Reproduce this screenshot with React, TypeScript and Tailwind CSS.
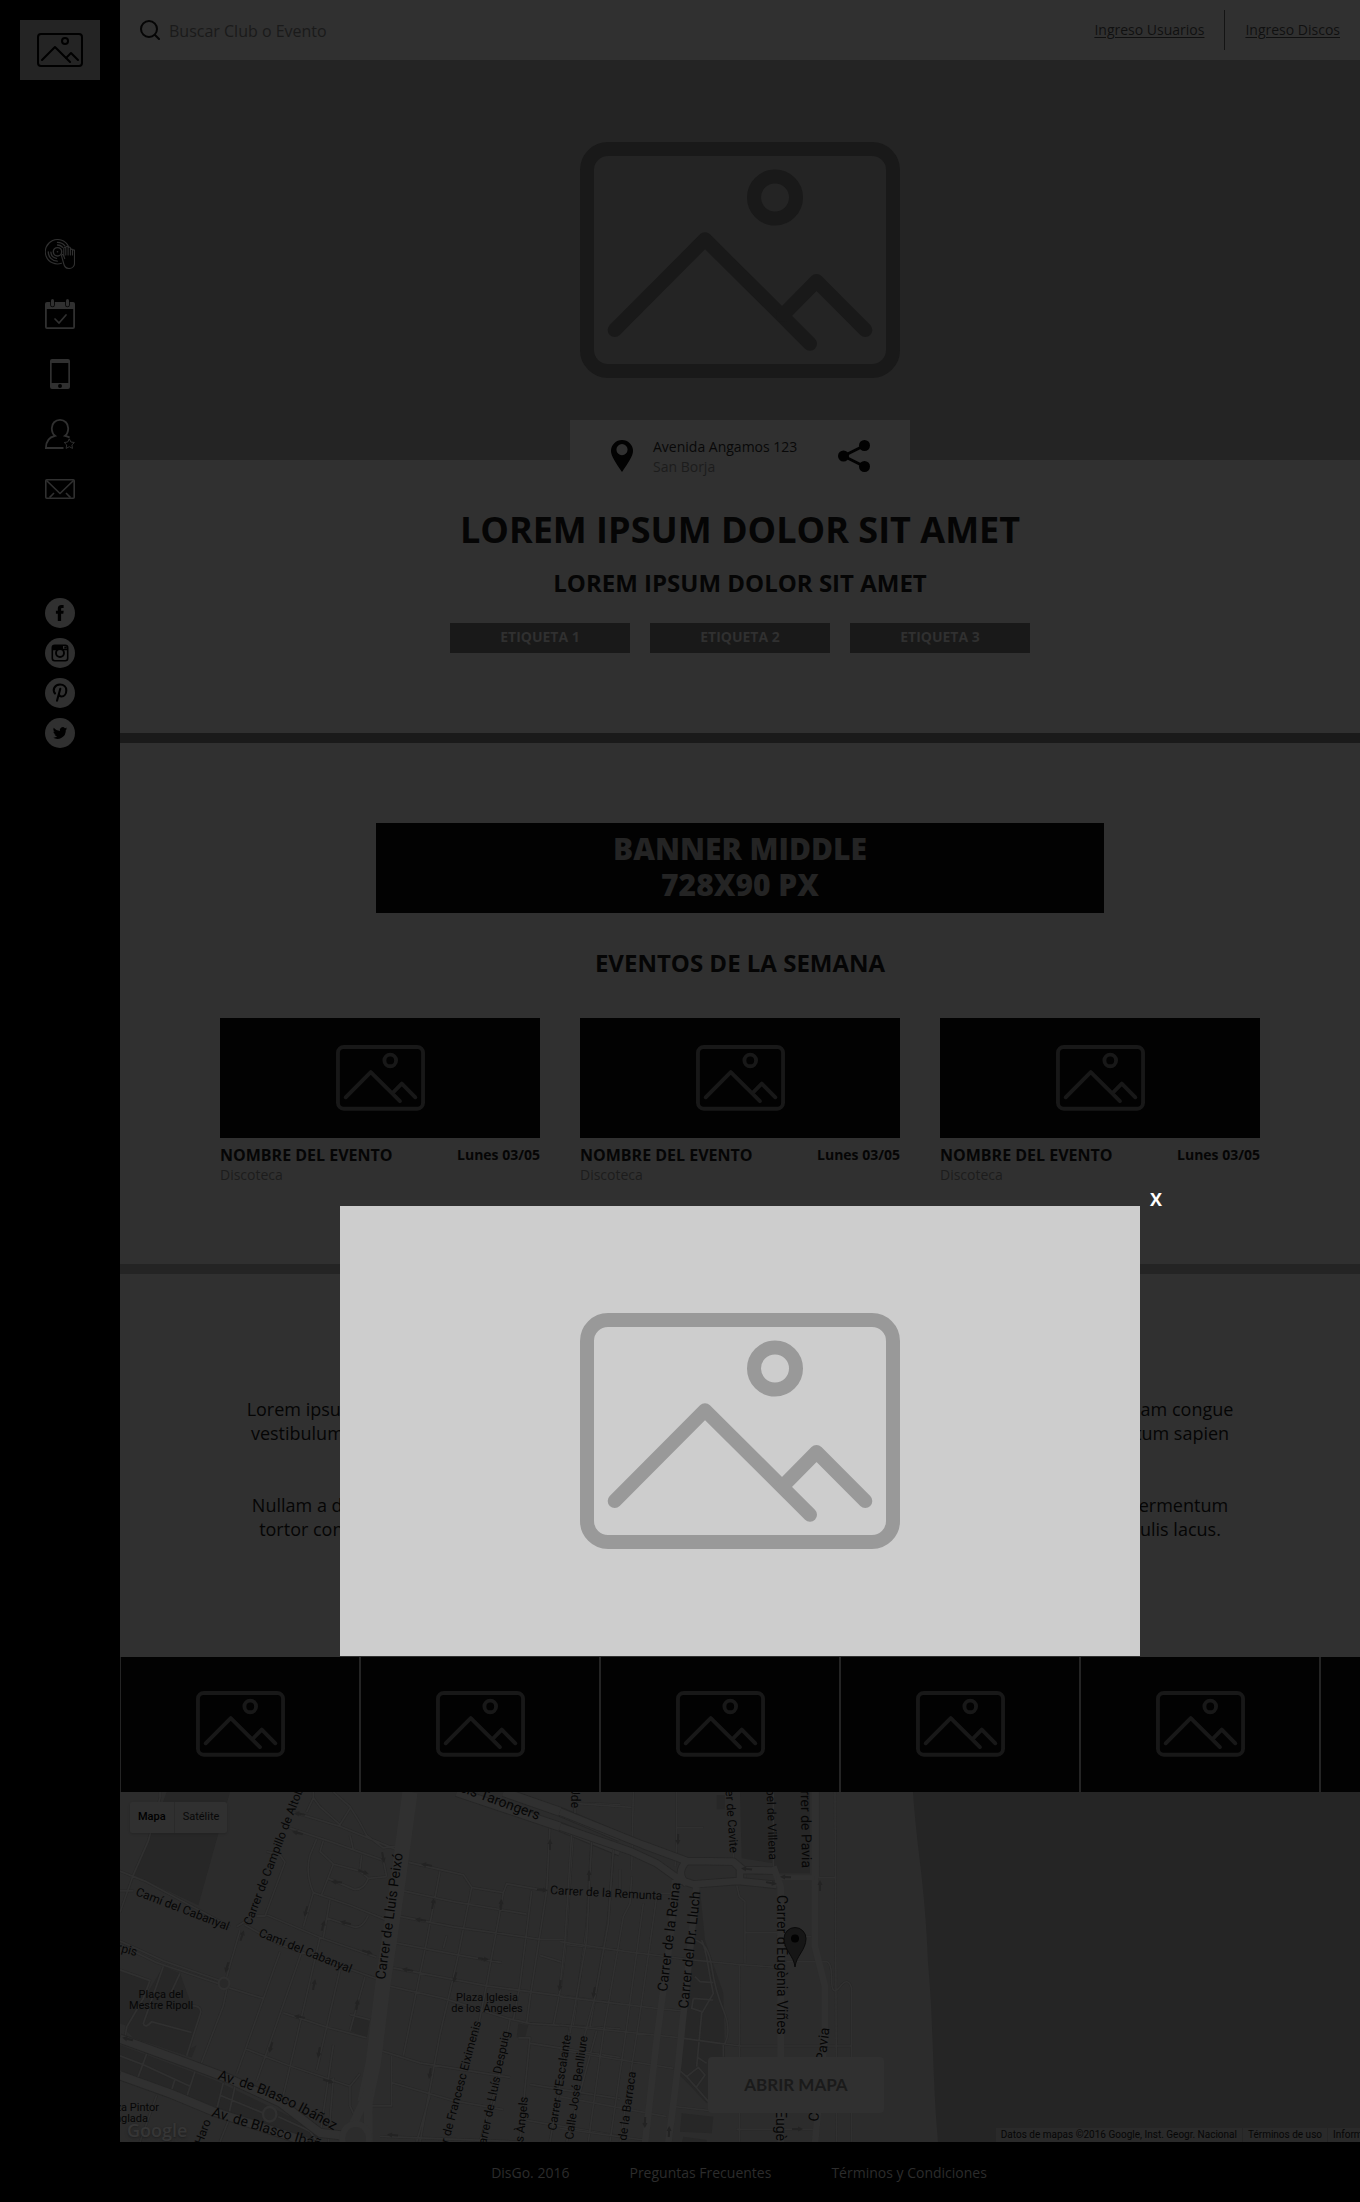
import React from "react";

function PictureIcon({ className }: { className: string }) {
  return (
    <svg viewBox="0 0 320 236" fill="none" stroke="currentColor" strokeWidth="14" strokeLinecap="round" strokeLinejoin="round" className={className} aria-hidden="true">
      <rect x="7" y="7" width="306" height="222" rx="21" />
      <circle cx="195" cy="55.500" r="21" />
      <path d="M34.700 188 125 97.300 230 201.700" />
      <path d="M203 173 236.500 139 285.300 188" />
    </svg>
  );
}

function DiscIcon() {
  return (
    <svg viewBox="0 0 30 30" className="h-[30px] w-[30px]" fill="none" stroke="currentColor" strokeWidth="1.100" strokeLinecap="round" aria-hidden="true">
      <path d="M23.500 7.500A12.200 12.200 0 1 0 16.500 24.300" />
      <circle cx="12.500" cy="12.800" r="4.200" strokeWidth="1.400" />
      <circle cx="12.500" cy="12.800" r="0.800" fill="currentColor" stroke="none" />
      <path d="M12.500 3.400a9.400 9.400 0 0 1 7.300 3.500M12.500 6a6.800 6.800 0 0 1 5 2.200M3.300 12.800a9.200 9.200 0 0 0 9 9.400M5.900 13.200a6.600 6.600 0 0 0 5.600 6.100" strokeWidth="1.300" />
      <path d="M18.800 17V9.200c0-1.300 2-1.300 2 0V16M20.800 9v-.8c0-1.300 2.300-1.300 2.300 0V16M23.100 9c0-1.300 2.300-1.300 2.300 0v7M25.400 11c0-1.200 2.100-1.200 2.100 0V16" />
      <path d="M27.500 11.500c0-1 2-1 2 0v13c0 2-1.500 5-5.500 5-3.400 0-4.600-2.200-5.200-4.500l-2.200-8c-.4-1.600 1.400-1.900 2-.6l1.100 3.200" />
    </svg>
  );
}

function CalendarIcon() {
  return (
    <svg viewBox="0 0 30 30" className="h-[30px] w-[30px]" aria-hidden="true">
      <path fill="currentColor" fillRule="evenodd" d="M2 3h26a2 2 0 0 1 2 2v23a2 2 0 0 1-2 2H2a2 2 0 0 1-2-2V5a2 2 0 0 1 2-2Zm-.200 7v18.200h26.400V10Z" />
      <rect x="5.200" y="-1" width="4.600" height="9.300" rx="2.300" className="fill-black" />
      <rect x="20.200" y="-1" width="4.600" height="9.300" rx="2.300" className="fill-black" />
      <rect x="6" y="0" width="3" height="7.500" rx="1.500" fill="currentColor" />
      <rect x="21" y="0" width="3" height="7.500" rx="1.500" fill="currentColor" />
      <path d="m10 20 4 4 7-8" fill="none" stroke="currentColor" strokeWidth="1.700" strokeLinecap="round" />
    </svg>
  );
}

function PhoneIcon() {
  return (
    <svg viewBox="0 0 30 30" className="h-[30px] w-[30px]" fill="currentColor" fillRule="evenodd" aria-hidden="true">
      <path d="M7 0h16a2 2 0 0 1 2 2v26a2 2 0 0 1-2 2H7a2 2 0 0 1-2-2V2a2 2 0 0 1 2-2Zm-.300 4v20h16.600V4Zm8.300 21a2 2 0 1 0 0 4 2 2 0 0 0 0-4Z" />
    </svg>
  );
}

function UserStarIcon() {
  return (
    <svg viewBox="0 0 30 30" className="h-[30px] w-[30px]" fill="none" stroke="currentColor" aria-hidden="true">
      <path strokeWidth="1.800" d="M18.500 29H.900c0-7 2.600-10.800 9.100-12.200C7.600 15 6.800 11.700 6.800 9.200c0-4.800 3.500-8.300 8.200-8.300s8.200 3.500 8.200 8.300c0 2.500-.8 5.800-3.200 7.600 1.900.4 3.400.9 4.600 1.700" />
      <path strokeWidth="1" strokeLinejoin="round" d="m24.300 19.800 1.600 3.200 3.500.5-2.500 2.400.6 3.500-3.200-1.700-3.200 1.700.6-3.500-2.500-2.400 3.500-.5Z" />
    </svg>
  );
}

function MailIcon() {
  return (
    <svg viewBox="0 0 30 20" className="h-5 w-[30px]" fill="none" stroke="currentColor" strokeWidth="1.600" strokeLinejoin="round" aria-hidden="true">
      <rect x="0.800" y="0.800" width="28.400" height="18.400" rx="1" />
      <path d="m1.500 1.500 13.500 13 13.500-13M9 14l-4.500 4.600M21 14l4.500 4.600" />
    </svg>
  );
}

const menu = [
  { label: "Discotecas", icon: <DiscIcon /> },
  { label: "Eventos", icon: <CalendarIcon /> },
  { label: "Aplicación", icon: <PhoneIcon /> },
  { label: "Favoritos", icon: <UserStarIcon /> },
  { label: "Contacto", icon: <MailIcon /> },
];

const social = [
  {
    label: "Facebook",
    art: <path className="fill-black" d="M12.800 23v-7.200h-1.900v-3h1.900v-2.200c0-2.400 1.300-3.700 3.600-3.700h2.200v3h-1.400c-.9 0-1.100.4-1.100 1.100v1.800h2.600l-.4 3h-2.200V23Z" />,
  },
  {
    label: "Instagram",
    art: (
      <g className="stroke-black" fill="none">
        <rect x="7.300" y="7.300" width="15.400" height="15.400" rx="2.500" strokeWidth="1.600" />
        <path d="M7 11.500h5M18 11.500h5" strokeWidth="1.600" />
        <path d="M8 8h10v3H8Z" className="fill-black" stroke="none" />
        <circle cx="15" cy="15" r="4" strokeWidth="1.900" />
        <path d="M20.500 8.500v2" strokeWidth="2.400" />
      </g>
    ),
  },
  {
    label: "Pinterest",
    art: (
      <path
        className="stroke-black"
        fill="none"
        strokeWidth="2.100"
        strokeLinecap="round"
        d="M10 15.500C7.300 12 9.200 6.500 15 6.500c4 0 6.300 2.500 6.300 5.700 0 3.600-2 6.300-4.800 6.300-1.600 0-2.600-1-2.400-2.300M15.300 10.800 12 22.800"
      />
    ),
  },
  {
    label: "Twitter",
    art: (
      <path
        className="fill-black"
        d="M22.200 10.600c-.5.200-1.100.4-1.700.5.600-.4 1-.9 1.300-1.600-.6.300-1.200.6-1.900.7a2.900 2.900 0 0 0-5 2.700c-2.500-.1-4.600-1.300-6.100-3.100-.8 1.300-.4 3.100.9 4-.5 0-.9-.2-1.300-.4 0 1.400 1 2.600 2.400 2.900-.4.100-.9.100-1.300 0 .4 1.200 1.400 2 2.700 2a6 6 0 0 1-4.400 1.300 8.400 8.400 0 0 0 13-7.500c.5-.4 1-.9 1.400-1.500Z"
      />
    ),
  },
];

function Sidebar() {
  return (
    <aside className="flex w-30 shrink-0 flex-col items-center bg-black pt-5 text-[#303030]">
      <a href="#inicio" aria-label="DisGo" className="flex h-[60px] w-20 items-center justify-center bg-[#242424] text-black">
        <PictureIcon className="w-[46px]" />
      </a>
      <nav aria-label="Principal" className="mt-[159px] flex flex-col gap-[30px]">
        {menu.map((m) => (
          <a key={m.label} href="#menu" aria-label={m.label}>
            {m.icon}
          </a>
        ))}
      </nav>
      <nav aria-label="Redes sociales" className="mt-[99px] flex flex-col gap-2.5">
        {social.map((s) => (
          <a key={s.label} href="#social" aria-label={s.label}>
            <svg viewBox="0 0 30 30" className="h-[30px] w-[30px]" aria-hidden="true">
              <circle cx="15" cy="15" r="15" fill="currentColor" />
              {s.art}
            </svg>
          </a>
        ))}
      </nav>
    </aside>
  );
}

function Header() {
  return (
    <header className="flex h-[60px] items-center justify-between bg-[#303030] px-5">
      <label className="flex items-center gap-[9px]">
        <svg viewBox="0 0 20 20" className="h-5 w-5" fill="none" stroke="#050505" strokeWidth="2" strokeLinecap="round" aria-hidden="true">
          <circle cx="9" cy="9" r="8" />
          <path d="m15 15 4 4" />
        </svg>
        <input type="search" aria-label="Buscar" placeholder="Buscar Club o Evento" className="w-60 bg-transparent pt-0.5 text-base text-[#1a1a1a] outline-none placeholder:text-[#1a1a1a]" />
      </label>
      <nav aria-label="Ingreso" className="flex items-center gap-5 text-sm text-[#101010]">
        <a href="#usuarios" className="underline underline-offset-2">Ingreso Usuarios</a>
        <span className="h-10 w-px bg-[#141414]" />
        <a href="#discos" className="underline underline-offset-2">Ingreso Discos</a>
      </nav>
    </header>
  );
}

function VenueIntro() {
  return (
    <section className="flex flex-col items-center border-b-10 border-[#1a1a1a] pb-20">
      <div className="-mt-10 flex h-[60px] w-[340px] items-start justify-between bg-[#303030] px-10 pt-5">
        <div className="flex gap-[19px]">
          <svg viewBox="0 0 24 32" className="h-8 w-6" fill="#020202" fillRule="evenodd" aria-hidden="true">
            <path d="M12 0a11 11 0 0 1 11 11c0 5-5 12-11 21C6 23 1 16 1 11A11 11 0 0 1 12 0Zm0 4a5.600 5.600 0 1 0 0 11.200A5.600 5.600 0 0 0 12 4Z" />
          </svg>
          <address className="-mt-[3px] text-sm/5 whitespace-nowrap not-italic">
            <div className="text-[#080808]">Avenida Angamos 123</div>
            <div className="text-[#1c1c1c]">San Borja</div>
          </address>
        </div>
        <button type="button" aria-label="Compartir">
          <svg viewBox="0 0 32 32" className="h-8 w-8" fill="#020202" aria-hidden="true">
            <path d="M5.500 16 26.500 5.500M5.500 16l21 10.500" stroke="#020202" strokeWidth="3" />
            <circle cx="5.500" cy="16" r="5.500" />
            <circle cx="26.500" cy="5.500" r="5.500" />
            <circle cx="26.500" cy="26.500" r="5.500" />
          </svg>
        </button>
      </div>
      <h1 className="mt-[30px] text-4xl/10 font-bold">LOREM IPSUM DOLOR SIT AMET</h1>
      <h2 className="mt-[17px] text-2xl/8 font-bold">LOREM IPSUM DOLOR SIT AMET</h2>
      <ul className="mt-6 flex gap-5">
        {["ETIQUETA 1", "ETIQUETA 2", "ETIQUETA 3"].map((t) => (
          <li key={t}>
            <a href="#etiqueta" className="flex h-[30px] w-[180px] items-center justify-center bg-[#191919] pb-0.5 text-sm font-bold text-[#303030]">
              {t}
            </a>
          </li>
        ))}
      </ul>
    </section>
  );
}

function Events() {
  return (
    <section className="flex flex-col items-center border-b-10 border-[#242424] px-[100px] pt-20 pb-[79px]">
      <div className="flex h-[90px] w-full max-w-[728px] flex-col items-center justify-center bg-[#020202] pb-0.5 text-3xl/9 font-extrabold text-[#242424]">
        <span>BANNER MIDDLE</span>
        <span>728X90 PX</span>
      </div>
      <h2 className="mt-[34px] text-2xl/8 font-bold">EVENTOS DE LA SEMANA</h2>
      <div className="mt-[39px] grid w-full grid-cols-3 gap-10">
        {[1, 2, 3].map((n) => (
          <article key={n}>
            <div className="flex h-30 items-center justify-center bg-[#020202] text-[#181818]">
              <PictureIcon className="w-[89px]" />
            </div>
            <div className="mt-[7px] flex items-center justify-between leading-5">
              <h3 className="text-base/5 font-bold">NOMBRE DEL EVENTO</h3>
              <time className="text-sm/5 font-bold">Lunes 03/05</time>
            </div>
            <p className="text-sm/5 text-[#1c1c1c]">Discoteca</p>
          </article>
        ))}
      </div>
    </section>
  );
}

function About() {
  return (
    <section className="flex flex-col gap-12 overflow-hidden pt-[123px] pb-[116px] text-center text-lg/6 whitespace-nowrap">
      <p>
        Lorem ipsum dolor sit amet, consectetur adipiscing elit. Praesent euismod est lectus vitae sapien, nec aliquam congue
        <br />
        vestibulum, nibh nisi sed interdum posuere, massa justo viverra turpis, vel ornare neque lorem condimentum sapien
      </p>
      <p>
        Nullam a dolor vel risus tempor suscipit. Integer nunc dapibus, augue non pretium luctus, nulla est porta fermentum
        <br />
        tortor congue. Sed mattis, est ac ipsum eget commodo rhoncus, velit orci laoreet purus, in tempus elit iaculis lacus.
      </p>
    </section>
  );
}

function Gallery() {
  return (
    <div className="flex h-[135px] gap-0.5 overflow-hidden bg-[#242424] pl-px">
      {[1, 2, 3, 4, 5, 6].map((n) => (
        <div key={n} className="flex w-[238px] shrink-0 items-center justify-center bg-[#020202] pb-px text-[#181818]">
          <PictureIcon className="w-[89px]" />
        </div>
      ))}
    </div>
  );
}

type Label = { t: string; x: number; y: number; r: number; s: number; a?: "start" | "middle" | "end" };

const labels: Label[] = [
  { t: "Camí del Cabanyal", x: 15, y: 103, r: 21, s: 12 },
  { t: "Camí del Cabanyal", x: 138, y: 144, r: 22, s: 12 },
  { t: "Carrer de Campillo de Altobuey", x: 131, y: 134, r: -69, s: 12 },
  { t: "Carrer de Lluís Peixó", x: 265, y: 188, r: -82, s: 14 },
  { t: "Avinguda dels Tarongers", x: 418, y: 28, r: 20, s: 14, a: "end" },
  { t: "Carrer Ude", x: 451, y: 16, r: 90, s: 12, a: "end" },
  { t: "Carrer de la Remunta", x: 430, y: 102, r: 3, s: 12 },
  { t: "Plaça del", x: 41, y: 206, r: 0, s: 11, a: "middle" },
  { t: "Mestre Ripoll", x: 41, y: 217, r: 0, s: 11, a: "middle" },
  { t: "Plaza Iglesia", x: 367, y: 209, r: 0, s: 11, a: "middle" },
  { t: "de los Ángeles", x: 367, y: 220, r: 0, s: 11, a: "middle" },
  { t: "Plaza Pintor", x: 39, y: 319, r: 0, s: 11, a: "end" },
  { t: "Anglada", x: 28, y: 330, r: 0, s: 11, a: "end" },
  { t: "Serpis", x: 16, y: 164, r: 15, s: 12, a: "end" },
  { t: "Av. de Blasco Ibáñez", x: 91, y: 324, r: 17, s: 14 },
  { t: "Carrer de Haro", x: 91, y: 329, r: -70, s: 12, a: "end" },
  { t: "Carrer de Francesc Eiximenis", x: 361, y: 230, r: -75, s: 12, a: "end" },
  { t: "Carrer de Lluís Despuig", x: 390, y: 240, r: -78, s: 12, a: "end" },
  { t: "Carrer dels Àngels", x: 408, y: 305, r: -84, s: 12, a: "end" },
  { t: "Carrer d'Escalante", x: 436, y: 339, r: -81, s: 12 },
  { t: "Calle José Benlliure", x: 453, y: 348, r: -82, s: 12 },
  { t: "Carrer de la Barraca", x: 516, y: 280, r: -82, s: 12, a: "end" },
  { t: "Carrer de la Reina", x: 547, y: 200, r: -83, s: 14 },
  { t: "Carrer del Dr. Lluch", x: 568, y: 217, r: -84, s: 14 },
  { t: "Carrer de Cavite", x: 610, y: 61, r: 86, s: 12, a: "end" },
  { t: "Carrer d'Isabel de Villena", x: 649, y: 68, r: 88, s: 12, a: "end" },
  { t: "Carrer de Pavia", x: 682, y: 76, r: 89, s: 14, a: "end" },
  { t: "Carrer d'Eugènia Viñes", x: 657, y: 103, r: 90, s: 14 },
  { t: "Carrer d'Eugènia Viñes", x: 656, y: 266, r: 90, s: 14 },
  { t: "Carrer de Pavia", x: 698, y: 330, r: -83, s: 14 },
];

const westStreets =
  "M120 424V440L85 560 40 655 0 760M0 645 80 675 160 715 330 800M0 700h40M0 840 130 895 300 950M0 850 110 900 300 960M325 970 430 1000M420 424M350 800 385 780M360 810 320 940M410 770 435 770 495 620 480 600 440 590M435 765 600 830 770 885M375 795 480 850 770 945M520 480 660 520 830 585M510 525 640 565 790 615 800 660M580 424V440L560 480M580 440 600 465 660 515 690 470M640 424 690 465 720 510 740 545 790 580 830 575M590 555 570 600Q555 650 580 705L550 800M610 560 600 590 640 625 605 710M640 625 720 645 745 665 800 660M625 665 700 695Q730 700 745 665M580 705 690 740 810 785M690 545 700 585M725 600 720 640M620 775 700 800Q725 808 745 768M630 725 610 830M600 830 490 1270M545 870 440 1150 410 1230M480 870 350 1210M660 920 590 1200M735 940 690 1090M320 975 310 1020 240 1190M490 1040 620 1080 740 1110M690 1045 750 1060M375 1140 500 1185 690 1245 720 1210M690 1245V1300L705 1330M640 1130 600 1380M865 620 1030 655 1055 690 1150 705 1160 680 1280 700M850 700 1000 730 1220 765M835 770 1000 800 1260 835 1340 835M825 845 1020 880 1145 900M820 915 1100 965 1500 1015M805 965 970 1000 1160 1055 1230 1070 1500 1085M960 645 920 840 850 1160M1055 690 1010 900 960 1100 900 1400M1150 705 1100 960 1070 1100M980 825 970 860M1235 700 1200 960 1180 1060M1290 520 1280 700 1230 1000 1220 1070M1360 540 1335 870 1320 980 1300 1075M1415 560 1400 800 1360 1075M1480 590 1465 780 1410 1080M1500 640V700M1260 880 1330 900M1340 850 1500 865M1195 1110H1230L1215 1250 1200 1400M1230 1125 1500 1165M780 1145 900 1180 1170 1220M815 1235 1000 1285 1150 1310M755 1300H815V1160M780 1385 1200 1400M930 1270 890 1400M1130 1240 1080 1400M1170 1060 1120 1300M1430 1090 1340 1400M1350 1080 1290 1400M1230 1240 1500 1280M1220 1340 1500 1385M1375 424H1360L1365 485M1375 455 1500 460M0 920 90 950 70 1000 20 1080 15 1110M130 910 70 1070Q75 1085 95 1065L215 1095M180 930 150 990M215 1020Q245 1020 242 1040L200 1160M0 1160 70 1185 210 1245M80 1155 50 1230M230 1190 200 1275M165 1225 150 1270M310 1235 290 1310M345 1245 325 1330M300 1270 430 1320M475 1330 570 1370 590 1400M110 1270 60 1400M330 1330 300 1400M640 1220 625 1400";

const eastStreets =
  "M40 70 215 82M45 60V100M220 36 215 270M350 36V200L345 260M350 143H430M35 160 15 480 0 620M95 185 80 480 30 760M160 210 145 430 105 650 70 780M215 290 210 370 190 410 130 760 85 1085M250 370 200 740 150 1085M290 350 240 700 180 1085M300 340H345M0 485 200 515 400 540 530 553 650 562M0 650 290 685 370 693M0 735 350 772 480 790 540 798 875 798M0 810 340 865M0 950 320 1010M0 1045 250 1080M345 980 450 992M530 315 538 350 555 365V550M555 458 660 458M520 220V245M538 555V1085M490 795V830M530 1048H760M775 36V290M825 36 830 1085M650 293 825 293M650 470 755 470M680 545 800 545Q815 548 815 600T840 620 875 625V1085M640 36V260M405 480Q445 490 455 560T490 690 495 790M425 480Q435 500 445 560T460 640L425 700 410 860M400 655 460 660M400 655 395 685 425 695M405 590 420 605 460 608M345 860 380 890 450 970M380 890 415 862 435 885 410 920M410 830 440 850M555 265 555 300";

const arrows = [
  [180, 22, 190], [178, 41, 195], [243, 80, 20], [217, 90, 185], [263, 65, 80], [186, 119, 105], [203, 134, -75],
  [226, 131, 195], [247, 160, 18], [307, 73, 190], [313, 112, -80], [301, 128, 190], [381, 113, -85], [422, 98, 5],
  [430, 53, -90], [469, 84, -88], [363, 167, 8], [288, 178, 190], [335, 185, 105], [440, 193, 97], [474, 200, 100],
  [122, 144, -72], [107, 175, 105], [194, 193, -78], [237, 213, -80], [180, 225, 190], [151, 255, 105], [199, 260, 100],
  [208, 289, 16], [310, 281, 100], [273, 343, 185], [8, 247, 195], [558, 47, 92], [627, 77, 187], [651, 91, 10],
  [666, 85, 182], [700, 94, -90], [525, 330, 92], [549, 340, -88], [677, 337, 0],
];

function MapDrawing() {
  return (
    <svg viewBox="0 0 1240 350" preserveAspectRatio="xMinYMin slice" className="absolute inset-0 h-full w-full" aria-hidden="true">
      <rect width="3000" height="350" fill="#2c2c2c" />
      <path d="M793 0h2207v350H818C812 280 814 240 808 170 805 90 797 60 793 0Z" fill="#252525" />
      <g transform="scale(.33333 .35842) translate(0 -424)">
        <path d="M140 424H330L235 740 40 655 90 550Z M130 910 180 930 215 1020 242 1030 210 1140 230 1130 215 1165 40 1110 20 1090 60 1020Z M0 925 90 950 30 1080 0 1070Z M0 1130 290 1230 600 1370 590 1400 560 1395 280 1300 0 1200Z M700 1050 750 1060 740 1110 690 1090Z M1195 1070 1225 1075 1215 1110 1190 1108Z" fill="#272727" />
        <g fill="none" strokeLinejoin="round">
          <path d={westStreets} stroke="#272727" strokeWidth="8" />
          <path d={westStreets} stroke="#303030" strokeWidth="5" />
          <path d="M1010 424 1320 521 1500 590M1150 424 1320 479 1500 550M0 1112 200 1180 330 1225 480 1290 600 1375 690 1385M0 1215 150 1265 280 1315 560 1400" stroke="#262626" strokeWidth="28" />
          <path d="M1010 424 1320 521 1500 590M1150 424 1320 479 1500 550M0 1112 200 1180 330 1225 480 1290 600 1375 690 1385M0 1215 150 1265 280 1315 560 1400" stroke="#303030" strokeWidth="23" />
          <path d="M870 424 830 700 790 950 760 1180 735 1290" stroke="#303030" strokeWidth="46" />
          <path d="M745 1260 690 1370M745 1250V1400" stroke="#303030" strokeWidth="26" />
          <circle cx="707" cy="1390" r="40" stroke="#303030" strokeWidth="18" fill="#2c2c2c" />
          <circle cx="312" cy="958" r="16" stroke="#303030" strokeWidth="6" fill="#292929" />
          <circle cx="449" cy="1323" r="20" stroke="#303030" strokeWidth="7" fill="#292929" />
        </g>
      </g>
      <g transform="translate(440 -12) scale(.33333)">
        <path d="M540 36H750V280H650L640 250 545 235Z M470 45H495V88H470Z M420 330 435 480 490 640 495 830 440 970 345 870 365 690 405 440Z M365 1000 460 1010 455 1060 360 1055Z M370 1070 440 1080V1090H365Z" fill="#272727" />
        <g fill="none" strokeLinejoin="round">
          <path d={eastStreets} stroke="#272727" strokeWidth="7" />
          <path d={eastStreets} stroke="#303030" strokeWidth="5" />
          <path d="M0 95 250 195 380 243 520 245 550 270 640 272M0 140 215 215 290 250 360 300 400 313 535 303 650 315M380 243Q345 280 380 312M520 245 540 265V305" stroke="#262626" strokeWidth="25" />
          <path d="M0 95 250 195 380 243 520 245 550 270 640 272M0 140 215 215 290 250 360 300 400 313 535 303 650 315M380 243Q345 280 380 312M520 245 540 265V305M345 300 330 480 290 780 255 1090M410 310 385 560 355 850 325 1090M640 260 662 320V1090M765 36V500L795 620V760L765 1090" stroke="#303030" strokeWidth="20" />
          <path d="M650 293H765" stroke="#303030" strokeWidth="14" />
        </g>
      </g>
      {arrows.map(([x, y, r], i) => (
        <path key={i} d="M-5-1H1V-2.500L6 0 1 2.500V1H-5Z" transform={`translate(${x} ${y}) rotate(${r})`} fill="#232323" />
      ))}
      <g fill="#060606" className="font-[Roboto]">
        {labels.map((l, i) => (
          <text key={i} transform={`translate(${l.x} ${l.y}) rotate(${l.r})`} fontSize={l.s} textAnchor={l.a ?? "start"}>
            {l.t}
          </text>
        ))}
        <path id="blasco" d="M97 287Q136 299 160 310T232 349" fill="none" />
        <text fontSize="14">
          <textPath href="#blasco">Av. de Blasco Ibáñez</textPath>
        </text>
      </g>
      <path d="M675 175C674 164 664 158 664 146.500a11 11 0 0 1 22 0C686 158 676 164 675 175Z" fill="#161616" stroke="#0a0a0a" />
      <circle cx="675" cy="146.500" r="4" fill="#020202" />
    </svg>
  );
}

function MapSection() {
  return (
    <section aria-label="Mapa" className="relative h-[350px] overflow-hidden bg-[#252525] font-[Roboto,sans-serif]">
      <MapDrawing />
      <div className="absolute top-2.5 left-2.5 flex h-[31px] rounded-xs bg-[#303030] text-[11px] shadow-sm">
        <button type="button" className="border-r border-[#2a2a2a] px-2 font-medium text-black">Mapa</button>
        <button type="button" className="px-2 text-[#080808]">Satélite</button>
      </div>
      <span className="absolute bottom-0 left-[7px] font-['Open_Sans'] text-lg/6 font-semibold text-[#363636] text-shadow-md">Google</span>
      <button type="button" className="absolute top-[265px] left-[588px] h-14 w-44 rounded-sm bg-[#303030] font-[Lato] text-[17px] font-bold text-[#1a1a1a]">
        ABRIR MAPA
      </button>
      <div className="absolute inset-x-0 bottom-0 flex h-3.5 justify-end gap-px text-[10px]/[14px] whitespace-nowrap text-[#060606]">
        <span className="bg-[#2a2a2a] px-[5px]">Datos de mapas ©2016 Google, Inst. Geogr. Nacional</span>
        <a href="#uso" className="bg-[#2a2a2a] px-[5px]">Términos de uso</a>
        <a href="#error" className="w-8 overflow-hidden bg-[#2a2a2a] pl-[5px]">Informar de un error de Maps</a>
      </div>
    </section>
  );
}

function Lightbox() {
  return (
    <div role="dialog" aria-label="Imagen ampliada" className="absolute top-[1206px] left-1/2 flex h-[450px] w-[800px] -translate-x-1/2 items-center justify-center bg-[#cdcdcd] text-[#999]">
      <PictureIcon className="w-80" />
      <button type="button" aria-label="Cerrar" className="absolute -top-[21px] left-full ml-2.5 text-lg/7 font-bold text-white">
        X
      </button>
    </div>
  );
}

export default function App() {
  return (
    <div className="flex bg-[#303030] font-['Open_Sans',sans-serif] text-[#050505]">
      <Sidebar />
      <div className="relative min-w-0 flex-1">
        <Header />
        <main>
          <div className="flex h-[400px] items-center justify-center bg-[#242424] text-[#191919]">
            <PictureIcon className="w-80" />
          </div>
          <VenueIntro />
          <Events />
          <About />
          <Gallery />
          <MapSection />
        </main>
        <footer className="flex h-[60px] items-center justify-center gap-[60px] bg-black pt-0.5 pr-0.5 text-sm text-[#2c2c2c]">
          <span>DisGo. 2016</span>
          <a href="#faq">Preguntas Frecuentes</a>
          <a href="#terminos">Términos y Condiciones</a>
        </footer>
        <Lightbox />
      </div>
    </div>
  );
}
